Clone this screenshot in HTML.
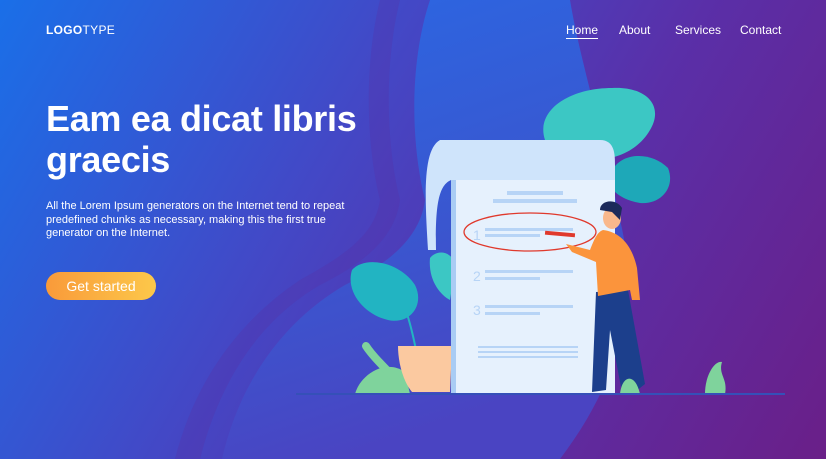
<!DOCTYPE html>
<html><head><meta charset="utf-8"><style>
*{margin:0;padding:0;box-sizing:border-box}
body{width:826px;height:459px;overflow:hidden;font-family:"Liberation Sans",sans-serif;position:relative;background:linear-gradient(120deg,#1a6fe8 0%,#4348c6 38%,#5a2fa8 65%,#6a1f88 100%)}
svg.bg{position:absolute;left:0;top:0}
.logo{position:absolute;left:46px;top:23px;color:#fff;font-size:12px;letter-spacing:0.3px}
.nav{position:absolute;top:23px;left:566px;color:#fff;font-size:12px}
.nav span{position:absolute;white-space:nowrap}
h1{position:absolute;left:46px;top:98px;color:#fff;font-size:36px;line-height:41px;font-weight:bold;letter-spacing:-0.3px}
p{position:absolute;left:46px;top:200px;width:320px;color:#fff;font-size:11px;line-height:13.5px}
.btn{position:absolute;left:46px;top:272px;width:110px;height:28px;border-radius:14px;background:linear-gradient(90deg,#f99a3a,#fcc84a);color:#fff;font-size:14px;text-align:center;line-height:28px}
</style></head><body>
<svg class="bg" width="826" height="459">
<defs>
<linearGradient id="b" x1="0" y1="0" x2="0.3" y2="1"><stop offset="0" stop-color="#2a68e4"/><stop offset="0.6" stop-color="#3a56cf"/><stop offset="1" stop-color="#4a44c2"/></linearGradient>
</defs>
<path d="M400 0 C385 60 385 140 400 200 C395 240 360 265 320 285 C260 320 220 380 200 459 L175 459 C195 380 240 320 300 280 C345 255 375 235 380 200 C365 140 365 60 380 0Z" fill="#5a2aa0" opacity="0.25"/>
<path d="M430 0 C410 60 410 140 425 200 C420 240 385 265 345 285 C285 320 240 380 222 459 L560 459 C620 380 640 300 620 220 C600 120 580 60 570 0Z" fill="url(#b)"/>
<!-- leaves back -->
<path d="M545 140 C535 110 570 88 612 88 C645 86 665 105 650 130 C630 165 575 170 545 140Z" fill="#3cc7c4"/>
<path d="M610 175 C618 152 650 150 668 168 C676 188 660 205 640 203 C622 200 606 190 610 175Z" fill="#1ea8b8"/>
<path d="M352 270 C365 255 400 262 415 285 C425 305 410 325 388 320 C365 315 345 292 352 270Z" fill="#22b4c2"/>
<path d="M430 258 C438 248 455 252 455 268 L450 300 C440 295 428 280 430 258Z" fill="#3cc7c4"/>
<path d="M416 350 C412 330 405 300 395 290" stroke="#22b4c2" stroke-width="2" fill="none"/>
<path d="M355 394 C360 375 385 358 405 372 L410 394Z" fill="#7fd39c"/>
<path d="M366 346 C375 360 390 372 398 382" stroke="#7fd39c" stroke-width="8" fill="none" stroke-linecap="round"/>
<path d="M398 346 L452 346 L450 392 L412 392 C402 380 398 360 398 346Z" fill="#fbc9a0"/>
<!-- paper -->
<path d="M440 140 L600 140 C615 140 615 155 615 165 L615 394 L451 394 L451 180 C440 185 435 200 436 250 L428 250 C425 200 422 150 440 140Z" fill="#cfe4fb"/>
<rect x="451" y="180" width="164" height="214" fill="#e6f1fd"/>
<rect x="451" y="180" width="5" height="214" fill="#a9ccf4"/>
<rect x="507" y="191" width="56" height="4" fill="#b7d4f6"/>
<rect x="493" y="199" width="84" height="4" fill="#b7d4f6"/>
<ellipse cx="530" cy="232" rx="66" ry="19" fill="none" stroke="#e0392c" stroke-width="1.3"/>
<text x="473" y="240" font-size="14" fill="#b7d4f6" font-family="Liberation Sans">1</text>
<rect x="485" y="228" width="88" height="3" fill="#b7d4f6"/><rect x="485" y="234" width="55" height="3" fill="#b7d4f6"/>
<text x="473" y="281" font-size="14" fill="#b7d4f6" font-family="Liberation Sans">2</text>
<rect x="485" y="270" width="88" height="3" fill="#b7d4f6"/><rect x="485" y="277" width="55" height="3" fill="#b7d4f6"/>
<text x="473" y="315" font-size="14" fill="#b7d4f6" font-family="Liberation Sans">3</text>
<rect x="485" y="305" width="88" height="3" fill="#b7d4f6"/><rect x="485" y="312" width="55" height="3" fill="#b7d4f6"/>
<rect x="478" y="346" width="100" height="2" fill="#b7d4f6"/><rect x="478" y="351" width="100" height="2" fill="#b7d4f6"/><rect x="478" y="356" width="100" height="2" fill="#b7d4f6"/>
<!-- person -->
<path d="M596 292 L628 290 L645 384 L635 392 L622 392 L610 330 L606 390 L592 392Z" fill="#1c3f8c"/>
<path d="M603 230 C620 232 632 245 637 268 L640 300 L632 300 L630 290 L598 296 L596 262 L572 252 L566 244 L590 250 C594 240 597 232 603 230Z" fill="#fb943c"/>
<ellipse cx="612" cy="218" rx="9" ry="11" fill="#f9b88c"/>
<path d="M600 210 C600 200 616 198 622 208 L620 220 L612 212Z" fill="#1c2a5a"/>
<rect x="545" y="232" width="30" height="4" fill="#e0392c" transform="rotate(5 560 234)"/>
<path d="M620 394 C622 375 635 372 640 394Z" fill="#7fd39c"/>
<path d="M705 394 C705 375 715 360 722 362 C718 375 728 378 725 394Z" fill="#7fd39c"/>
<rect x="296" y="393" width="489" height="2" fill="#3550b8"/>
</svg>
<div class="logo"><b>LOGO</b>TYPE</div>
<div class="nav"><span style="left:0;border-bottom:1px solid #fff;padding-bottom:1px">Home</span><span style="left:53px">About</span><span style="left:109px">Services</span><span style="left:174px">Contact</span></div>
<h1>Eam ea dicat libris<br>graecis</h1>
<p>All the Lorem Ipsum generators on the Internet tend to repeat predefined chunks as necessary, making this the first true generator on the Internet.</p>
<div class="btn">Get started</div>
</body></html>
